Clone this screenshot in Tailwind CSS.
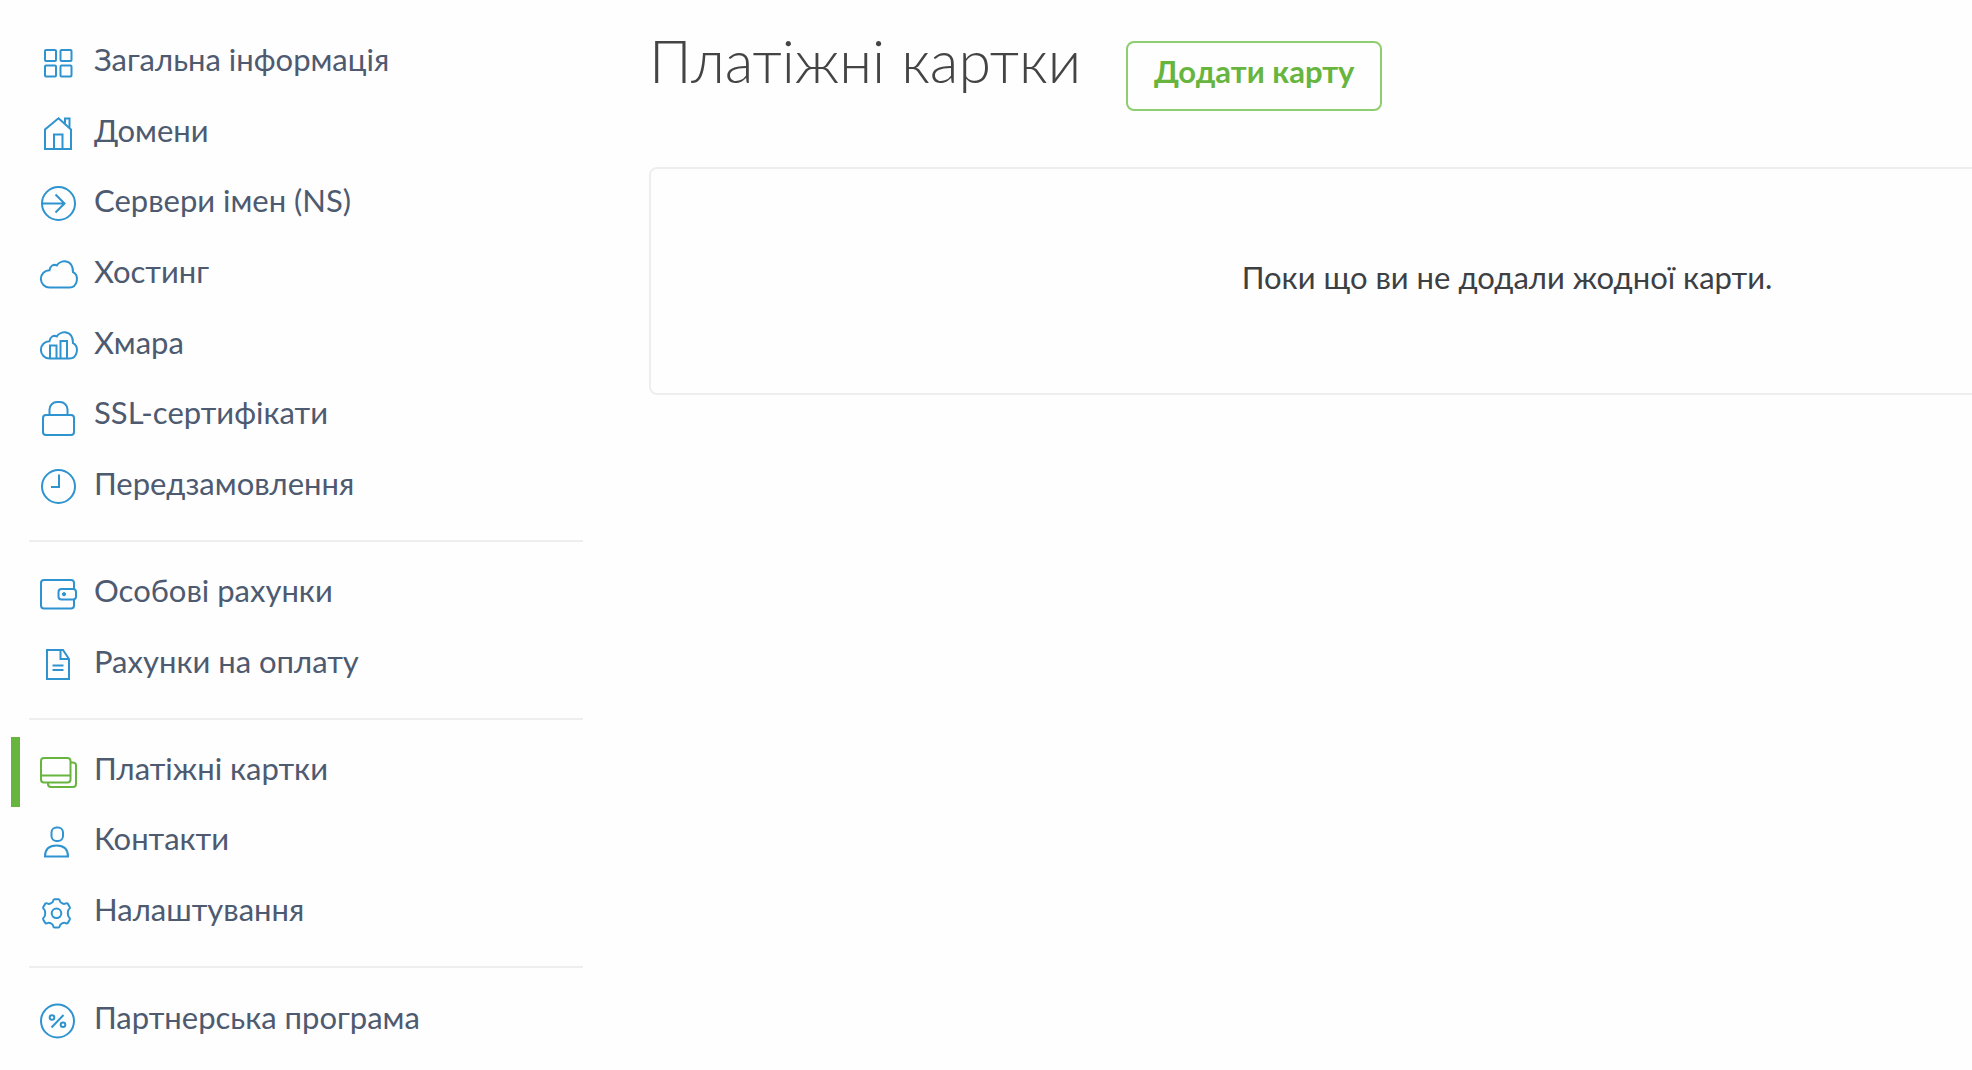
<!DOCTYPE html>
<html lang="uk">
<head>
  <meta charset="UTF-8" />
  <meta name="viewport" content="width=device-width, initial-scale=1.0"/>
  <title>Платіжні картки</title>
  <script src="https://cdn.jsdelivr.net/npm/@tailwindcss/browser@4"></script>
</head>
<body class="bg-[#fefefe] font-['Lato',sans-serif] min-h-screen overflow-x-hidden">
  <div class="flex items-start">
    <aside class="w-[583px] shrink-0 pt-7 text-[31px] leading-9 text-[#4d5a70]">
      <nav>
        <ul class="grid auto-rows-fr min-h-[494px] pl-[11px]">
          <li class="flex">
            <a href="#" class="flex flex-1 items-center gap-4 border-l-[9px] border-transparent pl-[18px]">
              <svg class="size-10 shrink-0 text-[#2f93cf]" viewBox="0 0 40 40" fill="none" stroke="currentColor" stroke-width="2" aria-hidden="true">
                <rect x="7" y="7" width="11" height="11" rx="1"/>
                <rect x="22.5" y="7" width="11" height="11" rx="1"/>
                <rect x="7" y="22.5" width="11" height="11" rx="1"/>
                <rect x="22.5" y="22.5" width="11" height="11" rx="1"/>
              </svg>
              <span class="pb-2">Загальна інформація</span>
            </a>
          </li>
          <li class="flex">
            <a href="#" class="flex flex-1 items-center gap-4 border-l-[9px] border-transparent pl-[18px]">
              <svg class="size-10 shrink-0 text-[#2f93cf]" viewBox="0 0 40 40" fill="none" stroke="currentColor" stroke-width="2" aria-hidden="true">
                <path d="M7 35V15.5L20.5 4.3L33 15.5V35Z"/>
                <path d="M16 35V20.5H24.5V35"/>
                <path d="M27 9.5V4.5H31.5V13.5"/>
              </svg>
              <span class="pb-2">Домени</span>
            </a>
          </li>
          <li class="flex">
            <a href="#" class="flex flex-1 items-center gap-4 border-l-[9px] border-transparent pl-[18px]">
              <svg class="size-10 shrink-0 text-[#2f93cf]" viewBox="0 0 40 40" fill="none" stroke="currentColor" stroke-width="2" aria-hidden="true">
                <circle cx="20.5" cy="19.5" r="16.5"/>
                <path d="M4 19.5H26.5M17.5 10.5L26.5 19.5L17.5 28.5"/>
              </svg>
              <span class="pb-2">Сервери імен (NS)</span>
            </a>
          </li>
          <li class="flex">
            <a href="#" class="flex flex-1 items-center gap-4 border-l-[9px] border-transparent pl-[18px]">
              <svg class="size-10 shrink-0 text-[#2f93cf]" viewBox="0 0 40 40" fill="none" stroke="currentColor" stroke-width="2" aria-hidden="true">
                <path d="M11.5 32.5A8.6 8.6 0 0 1 11.5 15.2C12.3 10.5 15.5 9 18.8 10.4C22.5 4.6 35 3.5 35 17.2C41.5 20.5 39.5 32.5 31.5 32.5Z"/>
              </svg>
              <span class="pb-2">Хостинг</span>
            </a>
          </li>
          <li class="flex">
            <a href="#" class="flex flex-1 items-center gap-4 border-l-[9px] border-transparent pl-[18px]">
              <svg class="size-10 shrink-0 text-[#2f93cf]" viewBox="0 0 40 40" fill="none" stroke="currentColor" stroke-width="2" aria-hidden="true">
                <path d="M11.5 32.5A8.6 8.6 0 0 1 11.5 15.2C12.3 10.5 15.5 9 18.8 10.4C22.5 4.6 35 3.5 35 17.2C41.5 20.5 39.5 32.5 31.5 32.5Z"/>
                <path d="M12 32.5V19.5H18.5V32.5M22.5 32.5V15H29V32.5"/>
              </svg>
              <span class="pb-2">Хмара</span>
            </a>
          </li>
          <li class="flex">
            <a href="#" class="flex flex-1 items-center gap-4 border-l-[9px] border-transparent pl-[18px]">
              <svg class="size-10 shrink-0 text-[#2f93cf]" viewBox="0 0 40 40" fill="none" stroke="currentColor" stroke-width="2" aria-hidden="true">
                <rect x="5" y="19" width="31" height="20" rx="3"/>
                <path d="M11.5 19V13.5A7.5 7.5 0 0 1 19 6H22A7.5 7.5 0 0 1 29.5 13.5V19"/>
              </svg>
              <span class="pb-2">SSL-сертифікати</span>
            </a>
          </li>
          <li class="flex">
            <a href="#" class="flex flex-1 items-center gap-4 border-l-[9px] border-transparent pl-[18px]">
              <svg class="size-10 shrink-0 text-[#2f93cf]" viewBox="0 0 40 40" fill="none" stroke="currentColor" stroke-width="2" aria-hidden="true">
                <circle cx="20.5" cy="19.5" r="16.5"/>
                <path d="M21 7.5V20H13"/>
              </svg>
              <span class="pb-2">Передзамовлення</span>
            </a>
          </li>
        </ul>
        <hr class="mt-[18px] mb-[17px] ml-[29px] border-t-2 border-[#eeeeee]"/>
        <ul class="grid auto-rows-fr min-h-[141px] pl-[11px]">
          <li class="flex">
            <a href="#" class="flex flex-1 items-center gap-4 border-l-[9px] border-transparent pl-[18px]">
              <svg class="size-10 shrink-0 text-[#2f93cf]" viewBox="0 0 40 40" fill="none" stroke="currentColor" stroke-width="2" aria-hidden="true">
                <path d="M36 15V9A3 3 0 0 0 33 6H6A3 3 0 0 0 3 9V31.5A3 3 0 0 0 6 34.5H33A3 3 0 0 0 36 31.5V25.5"/>
                <rect x="20.5" y="15" width="17.5" height="10.5" rx="3"/>
                <circle cx="26" cy="20.2" r="1.6" fill="currentColor" stroke-width="1"/>
              </svg>
              <span class="pb-2">Особові рахунки</span>
            </a>
          </li>
          <li class="flex">
            <a href="#" class="flex flex-1 items-center gap-4 border-l-[9px] border-transparent pl-[18px]">
              <svg class="size-10 shrink-0 text-[#2f93cf]" viewBox="0 0 40 40" fill="none" stroke="currentColor" stroke-width="2" aria-hidden="true">
                <path d="M9 5H25L31 14V34H9Z"/>
                <path d="M22.5 5V14H31M14.5 20.5H25.5M14.5 25H25.5"/>
              </svg>
              <span class="pb-2">Рахунки на оплату</span>
            </a>
          </li>
        </ul>
        <hr class="mt-[18px] mb-[17px] ml-[29px] border-t-2 border-[#eeeeee]"/>
        <ul class="grid auto-rows-fr min-h-[211px] pl-[11px]">
          <li class="flex">
            <a href="#" aria-current="page" class="flex flex-1 items-center gap-4 border-l-[9px] border-[#67b53e] pl-[18px]">
              <svg class="size-10 shrink-0 text-[#67b53e]" viewBox="0 0 40 40" fill="none" stroke="currentColor" stroke-width="2" aria-hidden="true">
                <rect x="3" y="6" width="29.5" height="24.5" rx="3"/>
                <path d="M3 23.5H32.5M32.5 10.5H35A3 3 0 0 1 38 13.5V32A3 3 0 0 1 35 35H13A3 3 0 0 1 10 32V30.5"/>
              </svg>
              <span class="pb-2">Платіжні картки</span>
            </a>
          </li>
          <li class="flex">
            <a href="#" class="flex flex-1 items-center gap-4 border-l-[9px] border-transparent pl-[18px]">
              <svg class="size-10 shrink-0 text-[#2f93cf]" viewBox="0 0 40 40" fill="none" stroke="currentColor" stroke-width="2" aria-hidden="true">
                <rect x="13.5" y="5.5" width="11.5" height="13.5" rx="5"/>
                <path d="M7 34.5C7 26.5 12 23.5 18.5 23.5S30 26.5 30 34.5Z"/>
              </svg>
              <span class="pb-2">Контакти</span>
            </a>
          </li>
          <li class="flex">
            <a href="#" class="flex flex-1 items-center gap-4 border-l-[9px] border-transparent pl-[18px]">
              <svg class="size-10 shrink-0 text-[#2f93cf]" viewBox="0 0 40 40" fill="none" stroke="currentColor" stroke-width="2" stroke-linejoin="round" aria-hidden="true">
                <path d="M16.5 6.2H20.5Q21.7 6.2 21.9 8Q22 9.2 24 10.2Q26 11.3 27 10.7Q29 9.6 29.8 10.7L31.8 14.2Q32.3 15.4 31 16.3Q29.8 17.2 29.8 20.3Q29.8 23.4 31 24.3Q32.3 25.2 31.8 26.4L29.8 29.9Q29 31 27 29.9Q26 29.3 24 30.4Q22 31.4 21.9 32.6Q21.7 34.4 20.5 34.4H16.5Q15.3 34.4 15.1 32.6Q15 31.4 13 30.4Q11 29.3 10 29.9Q8 31 7.2 29.9L5.2 26.4Q4.7 25.2 6 24.3Q7.2 23.4 7.2 20.3Q7.2 17.2 6 16.3Q4.7 15.4 5.2 14.2L7.2 10.7Q8 9.6 10 10.7Q11 11.3 13 10.2Q15 9.2 15.1 8Q15.3 6.2 16.5 6.2Z"/>
                <circle cx="18.5" cy="20.3" r="4.8"/>
              </svg>
              <span class="pb-2">Налаштування</span>
            </a>
          </li>
        </ul>
        <hr class="mt-[18px] mb-[17px] ml-[29px] border-t-2 border-[#eeeeee]"/>
        <ul class="grid auto-rows-fr min-h-[71px] pl-[11px]">
          <li class="flex">
            <a href="#" class="flex flex-1 items-center gap-4 border-l-[9px] border-transparent pl-[18px]">
              <svg class="size-10 shrink-0 text-[#2f93cf]" viewBox="0 0 40 40" fill="none" stroke="currentColor" stroke-width="2" aria-hidden="true">
                <circle cx="19.5" cy="20" r="16.5"/>
                <path d="M25.5 14L13.5 26.5"/>
                <circle cx="14" cy="16.5" r="2.3"/>
                <circle cx="25" cy="23.8" r="2.3"/>
              </svg>
              <span class="pb-2">Партнерська програма</span>
            </a>
          </li>
        </ul>
      </nav>
    </aside>

    <!-- wide content column, runs past the right edge of narrow windows -->
    <main class="ml-[66px] min-w-[1716px] flex-1 pt-[25px]">
      <div class="flex items-start gap-[45px]">
        <h1 class="text-[59px] leading-[72px] font-light text-[#444444]">Платіжні картки</h1>
        <button type="button" class="mt-4 rounded-lg border-2 border-[#8fce70] px-[26px] pt-[10px] pb-5 text-[31px] leading-9 font-bold text-[#67b53e]">Додати карту</button>
      </div>
      <section class="mt-14 rounded-lg border-2 border-[#eeeeee] px-8 pt-[90px] pb-[98px] text-center">
        <p class="text-[31px] leading-9 text-[#3c4043]">Поки що ви не додали жодної карти.</p>
      </section>
    </main>
  </div>
</body>
</html>
